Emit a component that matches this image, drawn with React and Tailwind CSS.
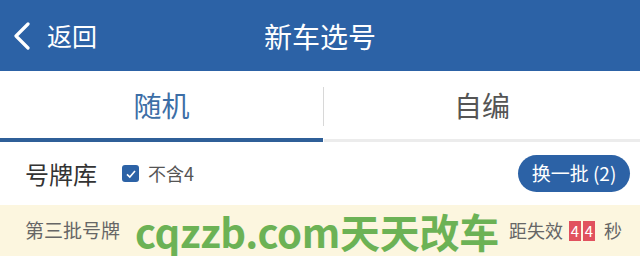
const font = { fontFamily: '"Noto Sans CJK SC", "Noto Sans", sans-serif' };

export default function App() {
  return (
    <div className="w-[640px] h-[256px] overflow-hidden bg-white" style={font}>
      <div className="h-[71px] bg-[#2c62a6] flex items-center relative">
        <div className="flex items-center pl-[12px] text-white">
          <svg width="20" height="28" viewBox="0 0 20 28">
            <path d="M16 2 L4 14 L16 26" fill="none" stroke="white" strokeWidth="3.2" strokeLinecap="round" strokeLinejoin="round" />
          </svg>
          <span className="ml-[15px] text-[25px] leading-none">返回</span>
        </div>
        <div className="absolute inset-0 flex items-center justify-center text-white text-[28px] leading-none">新车选号</div>
      </div>
      <div className="h-[71px] flex relative">
        <div className="w-[323px] flex items-center justify-center text-[28px] text-[#3d6ea6] border-b-[4px] border-[#2f5f98]">随机</div>
        <div className="w-px my-[16px] bg-[#d8d8d8]" />
        <div className="flex-1 flex items-center justify-center text-[28px] text-[#555] border-b-[3px] border-[#ececec]">自编</div>
      </div>
      <div className="h-[63px] flex items-center px-[25px] pr-[10px] whitespace-nowrap">
        <span className="text-[24px] text-[#333]">号牌库</span>
        <span className="ml-[25px] w-[17px] h-[17px] shrink-0 rounded-[3px] bg-[#2c62a6] flex items-center justify-center">
          <svg width="12" height="12" viewBox="0 0 12 12"><path d="M2 6.3 L4.8 9 L10 3" fill="none" stroke="white" strokeWidth="1.6" /></svg>
        </span>
        <span className="ml-[9px] text-[18px] text-[#555]">不含4</span>
        <button className="ml-auto w-[112px] h-[37px] shrink-0 rounded-full bg-[#2c62a6] text-white text-[19px]">换一批 (2)</button>
      </div>
      <div className="h-[51px] bg-[#fcf6df] flex items-center pl-[25px] pr-[18px] whitespace-nowrap">
        <span className="shrink-0 text-[19px] text-[#666]">第三批号牌</span>
        <span className="shrink-0 ml-[15px] text-[40px] font-bold text-[#6cb255] leading-[1.15] tracking-[-0.3px]">cqzzb.com天天改车</span>
        <span className="shrink-0 ml-auto text-[18px] text-[#666]">距失效</span>
        <span className="shrink-0 ml-[6px] w-[12px] h-[20px] bg-[#e1515e] text-white text-[15px] leading-[20px] text-center">4</span>
        <span className="shrink-0 ml-[2px] w-[12px] h-[20px] bg-[#e1515e] text-white text-[15px] leading-[20px] text-center">4</span>
        <span className="shrink-0 ml-[9px] text-[18px] text-[#666]">秒</span>
      </div>
    </div>
  );
}
